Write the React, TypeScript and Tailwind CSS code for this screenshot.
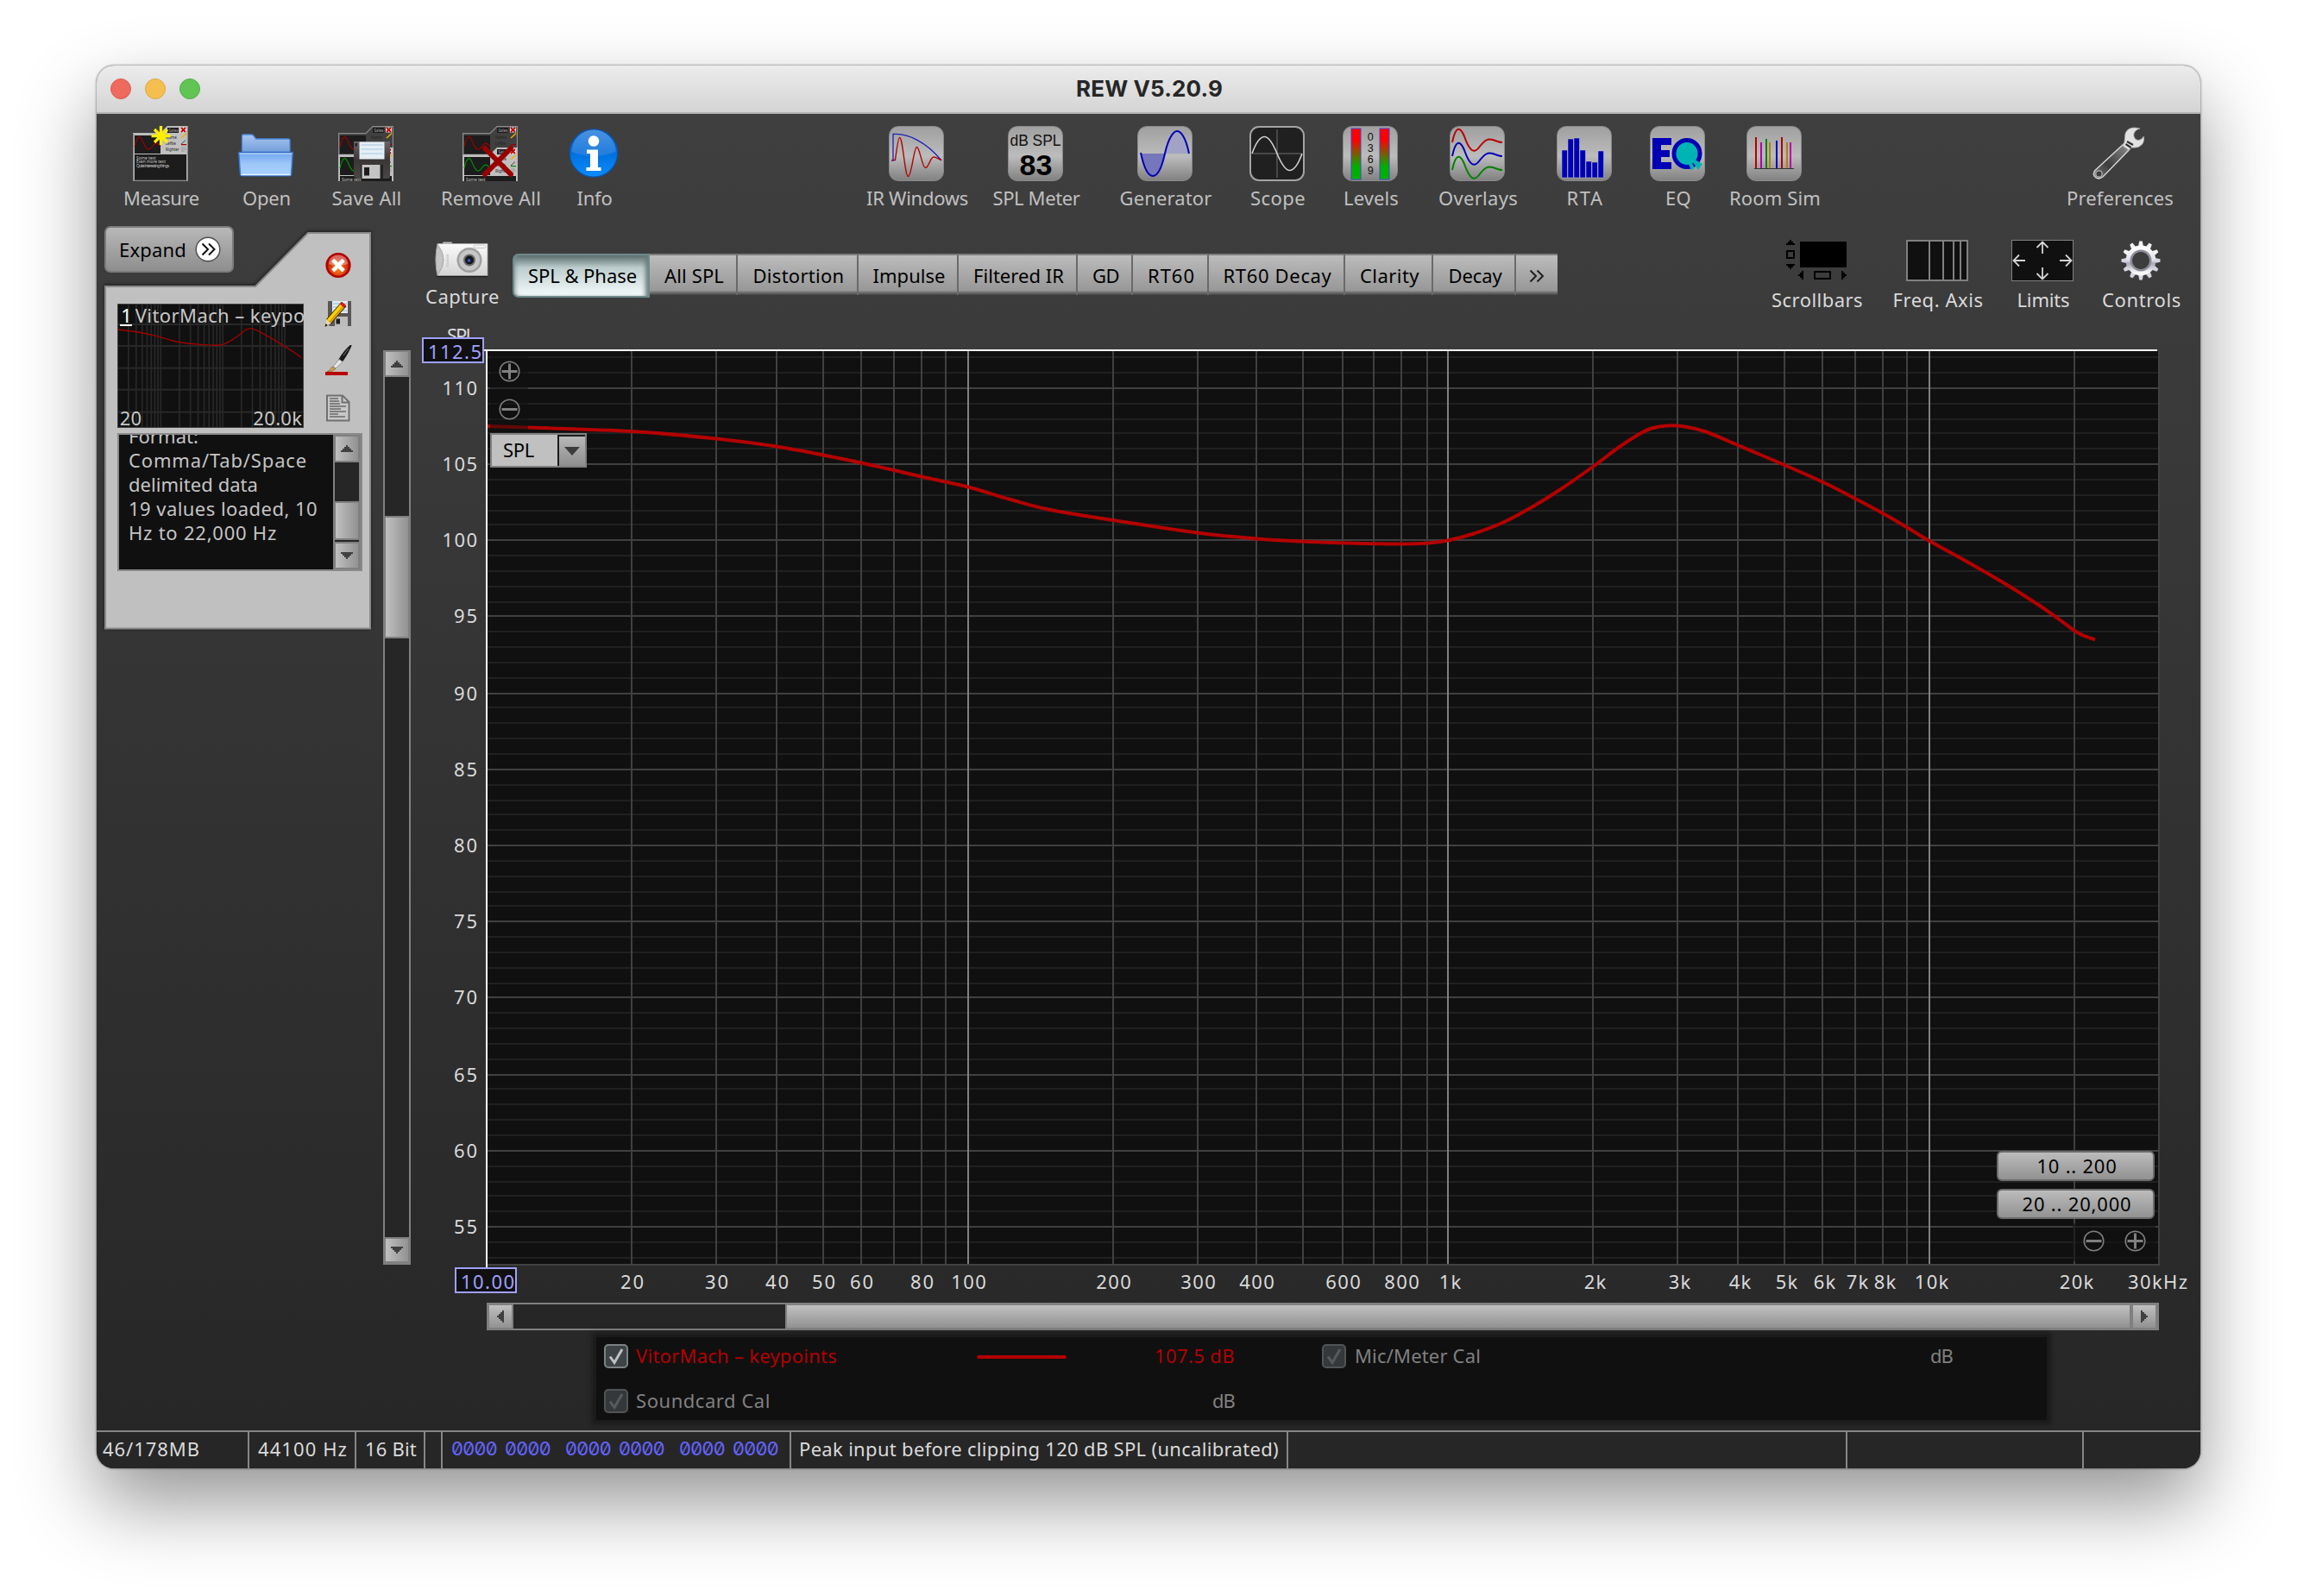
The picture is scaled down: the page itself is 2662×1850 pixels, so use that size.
import React, { useLayoutEffect, useRef, type ReactNode } from "react";

/* Single-line label whose tracking is adjusted so that it fills `w` pixels. */
function T({ w, children, className = "" }: { w: number; children: string; className?: string }) {
  const ref = useRef<HTMLSpanElement>(null);
  useLayoutEffect(() => {
    const el = ref.current;
    if (!el) return;
    el.style.letterSpacing = "0px";
    const natural = el.getBoundingClientRect().width;
    const n = children.length;
    el.style.letterSpacing = `${(w - natural) / n}px`;
  }, [w, children]);
  return (
    <span ref={ref} className={`inline-block whitespace-pre pl-[2px] leading-[22px] ${className}`}>
      {children}
    </span>
  );
}

/* ---------- toolbar icons ---------- */

function Tile({ children }: { children: ReactNode }) {
  return (
    <div className="h-16 w-16 rounded-[11px] border border-[#8a8a8a] bg-linear-to-b from-[#a0a0a0] via-[#bcbcbc] via-55% to-[#828282]">
      <svg viewBox="1 1 62 62" className="block h-full w-full">
        {children}
      </svg>
    </div>
  );
}

function MiniCard({ y = 0, wave, panel, edge }: { y?: number; wave: string; panel: string; edge: string }) {
  return (
    <g transform={`translate(0 ${y})`}>
      <path d="M.6 63V8.7H32L40 .6H63.4V63" fill={panel} stroke={edge} strokeWidth="1.2" />
      <rect x="2" y="11" width="30" height="21" fill="#1c1c1c" />
      <path d="M2 24C5 11 8 10 11 17s6 15 12 6c3-4 5-4 9 1" fill="none" stroke={wave} strokeWidth="1.2" />
      <rect x="2" y="33" width="60" height="30" fill="#1c1c1c" />
      <rect x="40" y="2" width="13" height="6" fill="#1c1c1c" />
      <text x="41.500" y="7" fontSize="4.500" fill="#aaa">Sales</text>
      <text x="38" y="15" fontSize="4.500" fill="#222">Name</text>
      <text x="38" y="22" fontSize="4.500" fill="#222">Leftie</text>
      <text x="38" y="29" fontSize="4.500" fill="#222">Righter</text>
      <rect x="55" y="1.500" width="7" height="6" fill="#e8e8e8" />
      <path d="M56 2l5 5M61 2l-5 5" stroke="#c00000" strokeWidth="1.800" />
      <path d="M56 14l6-5.500" stroke="#f0b000" strokeWidth="1.500" />
      <path d="M56 21l5-4.500" stroke="#444" strokeWidth="1" />
      <path d="M56 21.600h6" stroke={wave} strokeWidth="1.200" />
      <path d="M56 25h5M56 27h6M56 29h4" stroke="#888" strokeWidth=".7" />
      <text x="4" y="38.500" fontSize="4.800" fill="#c8c8c8">Some text</text>
    </g>
  );
}

function MeasureIcon() {
  return (
    <svg viewBox="0 0 64 64" className="h-16 w-16">
      <MiniCard wave="#a00000" panel="#c0c0c0" edge="#b8b8b8" />
      <text x="4" y="43.300" fontSize="4.800" fill="#c8c8c8">Even more text</text>
      <text x="4" y="48.300" fontSize="4.800" textLength="38" fill="#c8c8c8">Quite interesting things</text>
      <path d="M.6 9V63.400H63.400V.6" fill="none" stroke="#8c8c8c" strokeWidth="1.200" />
      <path d="M32.500 0v22M21.500 11.500h22M25 4l15 15M40 4L25 19" stroke="#ffee00" strokeWidth="3.400" />
      <circle cx="32.500" cy="11.500" r="4" fill="#fff000" />
    </svg>
  );
}

function OpenIcon() {
  return (
    <svg viewBox="0 0 64 64" className="h-16 w-16">
      <defs>
        <linearGradient id="fb" x1="0" y1="0" x2="0" y2="1">
          <stop offset="0" stopColor="#a9c6ee" />
          <stop offset="1" stopColor="#6f9cdc" />
        </linearGradient>
        <linearGradient id="ff" x1="0" y1="0" x2="0" y2="1">
          <stop offset="0" stopColor="#6fa6f0" />
          <stop offset=".5" stopColor="#9fc7f9" />
          <stop offset="1" stopColor="#a6d2fc" />
        </linearGradient>
      </defs>
      <path d="M4.500 32V11.500Q4.500 10 6 10H15q2 0 3 1.500L20.500 15H58Q60 15 60 17V32z" fill="url(#fb)" stroke="#4a86dc" strokeWidth="1.300" />
      <path d="M3 57.500H61V59H3z" fill="#2b2b2b" />
      <path d="M.8 30.800H63.200L61.500 56q-.1 1.800-2 1.800H4.500q-1.900 0-2-1.800z" fill="url(#ff)" stroke="#3c7bd4" strokeWidth="1.500" />
      <path d="M1.500 31.800H62.500" stroke="#d9ecff" strokeWidth="1.200" />
      <path d="M.8 30.500H63.200" stroke="#2d68c2" strokeWidth="1.400" />
      <path d="M3.500 56.500H60.500" stroke="#e8f4ff" strokeWidth="1.400" />
    </svg>
  );
}

function SaveAllIcon() {
  return (
    <svg viewBox="0 0 64 64" className="h-16 w-16">
      <defs>
        <linearGradient id="fl" x1="0" y1="0" x2="0" y2="1">
          <stop offset="0" stopColor="#6a6464" />
          <stop offset=".5" stopColor="#3a3636" />
          <stop offset="1" stopColor="#4a4646" />
        </linearGradient>
      </defs>
      <MiniCard wave="#a00000" panel="#404040" edge="#8c8c8c" />
      <MiniCard y={25} wave="#009000" panel="#c0c0c0" edge="#b8b8b8" />
      <path d="M18 18H60V58q0 3-3 3H21l-3-3z" fill="url(#fl)" />
      <rect x="24.500" y="18.500" width="29" height="20" fill="#e6eef5" />
      <path d="M26.500 22h25M26.500 27h25M26.500 32h25" stroke="#b9d3ea" strokeWidth="1.600" />
      <rect x="19.500" y="20" width="2.500" height="3.500" fill="#222" />
      <rect x="26" y="45" width="26" height="16" fill="#242222" />
      <path d="M27.500 45H48.500V61H27.500z" fill="#c4c4c4" />
      <rect x="30" y="48" width="6" height="9.500" fill="#1c1c1c" />
    </svg>
  );
}

function RemoveAllIcon() {
  return (
    <svg viewBox="0 0 64 64" className="h-16 w-16">
      <MiniCard wave="#a00000" panel="#404040" edge="#8c8c8c" />
      <MiniCard y={25} wave="#009000" panel="#c0c0c0" edge="#b8b8b8" />
      <path d="M26 26L56 56M56 26L26 56" stroke="#9b0000" strokeWidth="6" strokeLinecap="round" />
    </svg>
  );
}

function InfoIcon() {
  return (
    <svg viewBox="0 0 64 64" className="h-16 w-16">
      <defs>
        <linearGradient id="ig" x1="0" y1="0" x2="0" y2="1">
          <stop offset="0" stopColor="#0b62c4" />
          <stop offset=".5" stopColor="#0070de" />
          <stop offset="1" stopColor="#0a8cff" />
        </linearGradient>
        <linearGradient id="ih" x1="0" y1="0" x2="0" y2="1">
          <stop offset="0" stopColor="#5da2ea" />
          <stop offset="1" stopColor="#2a80dc" />
        </linearGradient>
      </defs>
      <circle cx="32" cy="31.500" r="27.600" fill="url(#ig)" stroke="#0a55b0" strokeWidth="1.200" />
      <path d="M6.500 30A25.500 25.500 0 0 1 57.500 30Q32 40 6.500 30z" fill="url(#ih)" opacity=".75" />
      <circle cx="32" cy="17.500" r="6.300" fill="#fff" />
      <path d="M24 27.500H37V48H40.500V52H23.500V48H28V32H24z" fill="#fff" />
    </svg>
  );
}

function IrIcon() {
  return (
    <Tile>
      <path d="M3 40H5V9.500C22 8 44 19 61 40" fill="none" stroke="#2020b8" strokeWidth="1.300" />
      <path d="M5 39.500H7.500C9 28 11 13.500 12.500 13.500c4 0 6 45 10 45S29 24.500 32.500 24.500s6 24 10 24S48 36 52 36s4 2.500 9 3.500" fill="none" stroke="#b40000" strokeWidth="1.400" />
    </Tile>
  );
}

function MeterIcon() {
  return (
    <Tile>
      <text x="2.500" y="22.500" fontSize="17.500" textLength="59" fontFamily="Liberation Sans" fill="#111">dB SPL</text>
      <text x="13.500" y="57" fontSize="34" textLength="38" fontWeight="bold" fontFamily="Liberation Sans" fill="#000">83</text>
    </Tile>
  );
}

function GeneratorIcon() {
  return (
    <Tile>
      <path d="M4 32C8 50 13 58 18 58S28 50 32 32z" fill="#7676bb" />
      <path d="M32 32C37 12 42 6 46 6S56 12 60 32z" fill="#a2a2c4" />
      <path d="M4 31C8 50 13 58 18 58S28 50 32 32S42 6 46 6S56 12 60 32" fill="none" stroke="#0000b8" strokeWidth="2" />
    </Tile>
  );
}

function ScopeIcon() {
  return (
    <div className="h-16 w-16 rounded-[11px] border-2 border-[#a4a4a4] bg-[#202020]">
      <svg viewBox="2 2 60 60" className="block h-full w-full">
        <path d="M32 4V60M4 32H60" stroke="#707070" strokeWidth="1" />
        <path d="M3 32C8 18 13 12.500 17.500 12.500S27 20 32 32S42 51.500 46.500 51.500S56 46 61 32" fill="none" stroke="#d0d0d0" strokeWidth="1.600" />
      </svg>
    </div>
  );
}

function LevelsIcon() {
  return (
    <Tile>
      <defs>
        <linearGradient id="lv" x1="0" y1="0" x2="0" y2="1">
          <stop offset=".22" stopColor="#ff0000" />
          <stop offset=".75" stopColor="#00b000" />
        </linearGradient>
      </defs>
      <rect x="10" y="3" width="11" height="59" fill="url(#lv)" stroke="#4646c8" strokeWidth="1" />
      <rect x="43" y="3" width="11" height="59" fill="url(#lv)" stroke="#4646c8" strokeWidth="1" />
      {["0", "3", "6", "9"].map((d, i) => (
        <text key={d} x="32.300" y={17 + i * 13} fontSize="12.500" textAnchor="middle" fontFamily="Liberation Sans" fill="#111">{d}</text>
      ))}
    </Tile>
  );
}

function OverlaysIcon() {
  const wave = "M3 19C7 0 12 0 17 12C22 26 27 34 34 25C40 17 44 14 50 16C55 18 58 19 61 19";
  return (
    <Tile>
      <path d={wave} fill="none" stroke="#b80000" strokeWidth="2" />
      <path d={wave} transform="translate(0 16)" fill="none" stroke="#0000b8" strokeWidth="2" />
      <path d={wave} transform="translate(0 32)" fill="none" stroke="#008000" strokeWidth="2" />
    </Tile>
  );
}

function RtaIcon() {
  const bars = [28, 15, 14, 28, 41, 42, 29];
  return (
    <Tile>
      {bars.map((y, i) => (
        <rect key={i} x={6 + i * 7} y={y} width="6.500" height={60 - y} fill="#0000b4" stroke="#c8c8c8" strokeWidth=".5" />
      ))}
    </Tile>
  );
}

function EqIcon() {
  return (
    <Tile>
      <path d="M3 14H25V22H13V28H23V36H13V42H25V50H3z" fill="#0000b4" />
      <ellipse cx="43" cy="32" rx="15" ry="15.500" fill="#00b4b4" stroke="#0000b4" strokeWidth="5" />
      <path d="M47 38L54 40 61 44 56 51z" fill="#00b4b4" />
      <path d="M46 42l4 8" stroke="#00b4b4" strokeWidth="4" />
    </Tile>
  );
}

function RoomIcon() {
  const lines: [number, number, string][] = [
    [11, 13, "#b40000"], [17, 19, "#b400b4"], [23, 15, "#008000"], [27, 19, "#b08000"],
    [35, 17, "#0000b4"], [41, 13, "#b40000"], [47, 19, "#b08000"], [51, 19, "#b400b4"],
  ];
  return (
    <Tile>
      {lines.map(([x, y, c]) => (
        <rect key={x} x={x - 1} y={y} width="2" height={49 - y} fill={c} />
      ))}
      <rect x="9" y="49" width="46" height="1" fill="#333" />
    </Tile>
  );
}

function WrenchIcon() {
  return (
    <svg viewBox="0 0 64 64" className="h-16 w-16">
      <defs>
        <linearGradient id="wr" x1="0" y1="1" x2="1" y2="0">
          <stop offset="0" stopColor="#7c7c7c" />
          <stop offset=".4" stopColor="#3c3c3c" />
          <stop offset="1" stopColor="#909090" />
        </linearGradient>
      </defs>
      <path d="M4.500 52L37 22l6 6L14 59.500q-5 4-9 .5t-.5-8z" fill="#1e1e1e" opacity=".6" />
      <path d="M4 51.500L37 21l7 6L13 59q-4.500 3.500-8.500.5T4 51.500z" fill="url(#wr)" stroke="#d4d4d4" strokeWidth="1.500" />
      <circle cx="8.500" cy="55.500" r="3.700" fill="#3c3c3c" stroke="#b4b4b4" strokeWidth="1.300" />
      <path d="M36 23C39 19 38 14 39 9C41 3 47 .5 56 3C52 4 48 7 49 12Q50 16 53.500 16.500Q57 17 60.500 12Q62 21 54 24.500Q50 25.500 46 25L43 28z" fill="#e2e2e2" stroke="#a8a8a8" strokeWidth=".8" />
      <path d="M41 18l7 4M39.500 21l6 4" stroke="#333" strokeWidth="2.200" />
    </svg>
  );
}

function Tool({ box, label, w, children }: { box: string; label: string; w: number; children: ReactNode }) {
  return (
    <div className={`flex flex-col items-center gap-2 ${box}`}>
      <div className="flex h-16 w-16 shrink-0">{children}</div>
      <T w={w} className="text-[#c0c0c0]">{label}</T>
    </div>
  );
}

/* ---------- scrollbars ---------- */

function Arrow({ rotate }: { rotate: string }) {
  return (
    <svg viewBox="0 0 14 14" className={`h-[14px] w-[14px] ${rotate}`}>
      <path d="M0 11V9H2V7H4V5H6V3H8V5H10V7H12V9H14V11z" fill="#404040" />
    </svg>
  );
}

const vKnob = "flex shrink-0 items-center justify-center border-2 border-[#808080] bg-linear-to-r from-[#c0c0c0] to-[#929292]";
const hKnob = "flex shrink-0 items-center justify-center border-2 border-[#808080] bg-linear-to-b from-[#c0c0c0] to-[#929292]";

/* ---------- left panel ---------- */

function Thumbnail() {
  const xs: number[] = [];
  for (let d = 10; d <= 10000; d *= 10)
    for (let k = 1; k < 10; k++) if (k * d > 20 && k * d < 20000) xs.push(108 + 215.500 * Math.log10((k * d) / 20));
  return (
    <svg viewBox="108 306 648 432" className="ml-[15px] mt-[36px] block h-[144px] w-[216px] shrink-0 bg-[#101010]">
      {xs.map((x) => (
        <rect key={x} x={x - 2} y="306" width="5" height="432" fill="#282828" />
      ))}
      {[378, 453, 530, 605, 683].map((y) => (
        <rect key={y} x="108" y={y - 3} width="648" height="6" fill="#282828" />
      ))}
      <path d="M110 396C160 400 200 408 230 415S280 430 300 435S380 447 410 449S455 452 467 450S490 442 510 430S540 408 550 400S565 392 572 392S595 399 620 413S680 448 700 461S735 484 748 494" fill="none" stroke="#a00000" strokeWidth="4" />
      <rect x="109.500" y="307.500" width="645" height="429" fill="none" stroke="#404040" strokeWidth="3" />
      <text x="121" y="372" fontSize="66" fill="#fff">1</text>
      <rect x="117" y="378" width="42" height="6" fill="#fff" />
      <text x="170" y="372" fontSize="66" textLength="590" fill="#c8c8c8">VitorMach – keypo</text>
      <text x="116" y="729" fontSize="66" textLength="76" fill="#c8c8c8">20</text>
      <text x="580" y="729" fontSize="66" textLength="170" fill="#c8c8c8">20.0k</text>
    </svg>
  );
}

function MeasurementCard() {
  return (
    <div className="relative ml-[9px] mt-2 h-[468px] w-[310px]">
      <svg viewBox="0 0 310 468" className="absolute inset-0 h-full w-full drop-shadow-[0_-1px_2px_#1c1c1c]">
        <path d="M1 70H175L236 8H308V466.500H1z" fill="#c0c0c0" stroke="#8a8a8a" strokeWidth="2" />
      </svg>
      <div className="relative flex">
        <div className="flex w-[231px] flex-col">
          <div className="flex h-[54px] w-[150px] items-center rounded-[7px] border-2 border-[#7c7c7c] bg-linear-to-b from-[#b8b8b8] to-[#8e8e8e] pl-[13px]">
            <T w={80} className="text-black">Expand</T>
            <svg viewBox="0 0 30 30" className="ml-[10px] h-[30px] w-[30px]">
              <circle cx="15" cy="15" r="13.800" fill="#fff" stroke="#505050" strokeWidth="1.500" />
              <path d="M8.500 8.500L15 15l-6.500 6.500M16 8.500L22.500 15 16 21.500" fill="none" stroke="#111" strokeWidth="2" />
            </svg>
          </div>
          <Thumbnail />
        </div>
        <div className="ml-6 flex w-8 flex-col items-center pt-[30px]">
          <svg viewBox="0 0 32 32" className="h-8 w-8 shrink-0">
            <defs>
              <radialGradient id="rx" cx=".5" cy=".65" r=".5">
                <stop offset="0" stopColor="#ff8c1a" />
                <stop offset="1" stopColor="#c61a0a" />
              </radialGradient>
            </defs>
            <circle cx="16" cy="15.500" r="13.300" fill="url(#rx)" stroke="#b00000" strokeWidth="2.600" />
            <path d="M5 14a11 10.500 0 0 1 22 0q-11 4-22 0z" fill="#fff" opacity=".35" />
            <path d="M9.700 9.300l12.500 12.500M22.200 9.300L9.700 21.800" stroke="#fff" strokeWidth="4.600" />
          </svg>
          <svg viewBox="0 0 32 32" className="mt-6 h-8 w-8 shrink-0">
            <path d="M4 1H31V30H6l-2-2z" fill="#5a5656" />
            <rect x="9" y="1" width="18" height="14" fill="#e4ecf3" />
            <path d="M10 4h16M10 8h16M10 12h16" stroke="#a8c4de" strokeWidth="1.300" />
            <rect x="12" y="19" width="15" height="11" fill="#bcbcbc" />
            <rect x="13.500" y="21.500" width="4.500" height="6" fill="#1c1c1c" />
            <path d="M5 24.500L22.500 4.500" stroke="#2a2000" strokeWidth="7.600" />
            <path d="M5 24.500L21 6" stroke="#ffd000" strokeWidth="5.800" />
            <path d="M6 25.500L22 7" stroke="#d08c00" strokeWidth="1.600" />
            <path d="M20.500 6.700L22.800 4" stroke="#e01414" strokeWidth="6.200" />
            <path d="M.5 31L2.500 22.500l5 4.300z" fill="#ead9ae" />
            <path d="M.5 31l1-4 2.300 2z" fill="#111" />
          </svg>
          <svg viewBox="0 0 32 36" className="mt-5 h-9 w-8 shrink-0">
            <path d="M17 17C21 10 26 4 31 0Q28 8 21 18z" fill="#1a1a1a" stroke="#1a1a1a" strokeWidth="1.500" />
            <path d="M22 12L28 4" stroke="#777" strokeWidth="1" />
            <path d="M10 25L17 16.500l4 3L13 27z" fill="#e6e6e6" stroke="#888" strokeWidth=".8" />
            <path d="M3 31Q7 29 9 25l4 2.500Q10 31 3 31z" fill="#c8a050" stroke="#7a5a20" strokeWidth=".6" />
            <rect x="1" y="31" width="26" height="4" fill="#b80000" />
          </svg>
          <svg viewBox="0 0 32 34" className="mt-5 h-[34px] w-8 shrink-0">
            <path d="M3 2.500H21L28.500 10V31.500H3z" fill="#c8c8c8" stroke="#707070" strokeWidth="2" />
            <path d="M20.500 3V10.500H28" fill="none" stroke="#707070" strokeWidth="2" />
            <path d="M6 6h10M6 9h11M6 12h12M6 15h19M6 18h13M6 21h19M6 24h10M6 27h18" stroke="#808080" strokeWidth="1.800" />
          </svg>
        </div>
      </div>
      <div className="relative ml-[15px] mt-[6px] flex h-[160px] w-[284px] border-2 border-[#8a8a8a] bg-[#101010]">
        <div className="flex h-full w-[248px] flex-col items-start overflow-hidden pl-[9px] text-[#c4c4c4]">
          <T w={83} className="-mt-[10px]">Format:</T>
          <T w={209} className="mt-[6px]">Comma/Tab/Space</T>
          <T w={152} className="mt-[6px]">delimited data</T>
          <T w={221} className="mt-[6px]">19 values loaded, 10</T>
          <T w={174} className="mt-[6px]">Hz to 22,000 Hz</T>
        </div>
        <div className="flex h-full w-8 flex-col border-x-2 border-[#808080] bg-[#262626]">
          <div className={`-mx-px h-8 ${vKnob}`}><Arrow rotate="" /></div>
          <div className={`-mx-px mt-[45px] h-[45px] ${vKnob}`} />
          <div className={`-mx-px mt-[2px] h-8 ${vKnob}`}><Arrow rotate="rotate-180" /></div>
        </div>
      </div>
    </div>
  );
}

/* ---------- tabs ---------- */

const tabs: [string, number, string][] = [
  ["All SPL", 71, "w-[102px]"],
  ["Distortion", 108, "w-[140px]"],
  ["Impulse", 86, "w-[116px]"],
  ["Filtered IR", 107, "w-[138px]"],
  ["GD", 33, "w-[64px]"],
  ["RT60", 57, "w-[88px]"],
  ["RT60 Decay", 128, "w-[158px]"],
  ["Clarity", 71, "w-[102px]"],
  ["Decay", 64, "w-[96px]"],
];

function Tabs() {
  return (
    <div className="mt-10 flex h-[52px] items-start text-black">
      <div className="flex h-[51px] w-[159px] justify-center rounded-l-[7px] border-2 border-[#6e8a8a] bg-linear-to-b from-[#5c6e6e] via-[#bccccc] via-30% to-[#f4fbfb] pl-px pt-3 shadow-[inset_-5px_0_5px_-2px_#6c7c7c,inset_5px_0_5px_-4px_#7c9090]">
        <T w={128}>SPL &amp; Phase</T>
      </div>
      {tabs.map(([name, w, box]) => (
        <div key={name} className={`flex h-[48px] justify-center border-r-2 border-t-2 border-r-[#6a6a6a] border-t-[#7c7c7c] bg-linear-to-b from-[#bcbcbc] via-[#989898] via-88% to-[#444] pl-px pt-3 ${box}`}>
          <T w={w}>{name}</T>
        </div>
      ))}
      <div className="flex h-[48px] w-12 justify-center border-t-2 border-t-[#7c7c7c] bg-linear-to-b from-[#bcbcbc] via-[#989898] via-88% to-[#444] pt-4">
        <svg viewBox="0 0 18 16" className="h-4 w-[18px]">
          <path d="M1.500 1.500L8 8l-6.500 6.500M9.500 1.500L16 8l-6.500 6.500" fill="none" stroke="#222" strokeWidth="2" />
        </svg>
      </div>
    </div>
  );
}

function CameraIcon() {
  return (
    <svg viewBox="0 0 62 44" className="h-11 w-[62px]">
      <defs>
        <linearGradient id="cm" x1="0" y1="0" x2="0" y2="1">
          <stop offset="0" stopColor="#fafafa" />
          <stop offset="1" stopColor="#d4d4d4" />
        </linearGradient>
      </defs>
      <rect x="9" y=".5" width="11" height="3" rx="1" fill="#bdbdbd" />
      <path d="M3 2.500H61V40H3Q-1 21 3 2.500z" fill="url(#cm)" stroke="#a8a8a8" strokeWidth=".8" />
      <path d="M3 3Q17 21 3 39Q-1 21 3 3z" fill="#c4c4c4" stroke="#999" strokeWidth=".8" />
      <path d="M2 40.500H61" stroke="#1c1c1c" strokeWidth="1.400" />
      <rect x="45" y="4" width="14" height="3.500" rx="1.700" fill="#f4f4f4" stroke="#b4b4b4" strokeWidth=".7" />
      <path d="M14.800 15v14" stroke="#c4c4c4" strokeWidth="2.400" strokeDasharray="1.500 1" />
      <circle cx="40" cy="21.500" r="14.500" fill="#a0a0a0" />
      <circle cx="40" cy="21.500" r="12" fill="#c6c6c6" />
      <circle cx="40" cy="21.500" r="7" fill="#6c6c6c" />
      <circle cx="40" cy="21.500" r="5" fill="#14141c" />
      <circle cx="39.500" cy="22" r="2" fill="#3c50b8" />
    </svg>
  );
}

function View({ box, label, w, children }: { box: string; label: string; w: number; children: ReactNode }) {
  return (
    <div className={`flex flex-col items-center gap-[10px] pt-6 ${box}`}>
      <div className="flex h-12 w-18 items-center justify-center">{children}</div>
      <T w={w} className="text-[#dadada]">{label}</T>
    </div>
  );
}

function ViewButtons() {
  const teeth = Array.from({ length: 12 }, (_, i) => i * 30);
  return (
    <>
      <View box="ml-[246px] w-[108px]" label="Scrollbars" w={108}>
        <svg viewBox="0 0 72 48" className="h-12 w-18">
          <rect x="17" y="2" width="54" height="30" fill="#000" />
          <path d="M1 6h10V4H9V2H7V0H5v2H3v2H1zM1 28h10v2H9v2H7v2H5v-2H3v-2H1zM21 36v10h-2v-2h-2v-2h-2v-2h2v-2h2v-2zM65 36v10h2v-2h2v-2h2v-2h-2v-2h-2v-2z" fill="#000" />
          <path d="M2 13h8v8H2zM34 37h18v8H34z" fill="none" stroke="#000" strokeWidth="2" />
        </svg>
      </View>
      <View box="ml-8 w-[108px]" label="Freq. Axis" w={107}>
        <svg viewBox="0 0 72 48" className="h-12 w-18">
          <rect x="1" y="1" width="70" height="46" fill="#101010" stroke="#808080" strokeWidth="2" />
          <path d="M27 1V47M43 1V47M55 1V47M63 1V47" stroke="#808080" strokeWidth="2" />
        </svg>
      </View>
      <View box="ml-[28px] w-[80px]" label="Limits" w={63}>
        <svg viewBox="0 0 72 48" className="h-12 w-18">
          <rect x=".5" y=".5" width="71" height="47" fill="#101010" stroke="#808080" />
          <path d="M36 16V3M29.500 9L36 2.500 42.500 9M36 32V45M29.500 39L36 45.500 42.500 39M16 24H3M9 17.500L2.500 24 9 30.500M56 24H69M63 17.500L69.500 24 63 30.500" fill="none" stroke="#d4d4d4" strokeWidth="1.800" />
        </svg>
      </View>
      <View box="ml-[28px] w-[92px]" label="Controls" w={94}>
        <svg viewBox="-24 -24 48 48" className="h-12 w-12">
          <defs>
            <linearGradient id="gr" x1="0" y1="0" x2="0" y2="1">
              <stop offset="0" stopColor="#fdfdfd" />
              <stop offset=".5" stopColor="#dcdce4" />
              <stop offset=".62" stopColor="#a8a8ba" />
              <stop offset="1" stopColor="#f8f8fa" />
            </linearGradient>
          </defs>
          {teeth.map((a) => (
            <path key={a} d="M-3.200-15L-1.800-22.500H1.800L3.200-15z" transform={`rotate(${a})`} fill={a > 80 && a < 280 ? "#d4d4e0" : "#f2f2f4"} />
          ))}
          <circle r="14" fill="none" stroke="url(#gr)" strokeWidth="7" />
          <circle r="11.200" fill="none" stroke="#8c8c98" strokeWidth="2.600" />
          <circle r="9.800" fill="#3d3d3d" />
        </svg>
      </View>
    </>
  );
}

/* ---------- chart ---------- */

const curve: [number, number][] = [
  [564, 494], [612, 495.5], [732, 500], [830, 508.500], [900, 517.500], [954, 527.500], [998, 536.500], [1036, 545],
  [1070, 553], [1122, 564.500], [1171, 579], [1217, 591], [1290, 603], [1387, 617.500], [1457, 624.500], [1508, 627.500],
  [1562, 629.500], [1621, 630.500], [1655, 629.500], [1678, 626.500], [1708, 618.500], [1741, 606], [1775, 588], [1808, 567.500],
  [1846, 541], [1876, 518.500], [1900, 503], [1914, 496.500], [1932, 493.500], [1952, 494.500], [1977, 500.500], [2015, 516.500],
  [2068, 539], [2114, 559.500], [2152, 579], [2182, 595], [2207, 609.500], [2236, 627], [2283, 653], [2326, 678],
  [2363, 701.500], [2385, 717], [2404, 731], [2414, 736.500], [2428, 741.500],
];

function smooth(p: [number, number][]) {
  let d = `M${p[0][0]} ${p[0][1]}`;
  for (let i = 0; i < p.length - 1; i++) {
    const a = p[Math.max(i - 1, 0)], b = p[i], c = p[i + 1], e = p[Math.min(i + 2, p.length - 1)];
    d += `C${b[0] + (c[0] - a[0]) / 6} ${b[1] + (c[1] - a[1]) / 6} ${c[0] - (e[0] - b[0]) / 6} ${c[1] - (e[1] - b[1]) / 6} ${c[0]} ${c[1]}`;
  }
  return d;
}

const odd = (v: number) => 2 * Math.round((v - 1) / 2) + 1;
const gx = (f: number) => odd(563.300 + 557.200 * Math.log10(f / 10));
const gy = (db: number) => odd(448.700 + (110 - db) * 17.680);

const freqLabels: [number, string][] = [
  [20, "20"], [30, "30"], [40, "40"], [50, "50"], [60, "60"], [80, "80"], [100, "100"], [200, "200"], [300, "300"],
  [400, "400"], [600, "600"], [800, "800"], [1000, "1k"], [2000, "2k"], [3000, "3k"], [4000, "4k"], [5000, "5k"],
  [6000, "6k"], [7000, "7k"], [8000, "8k"], [10000, "10k"], [20000, "20k"],
];

function ZoomMark({ x, y, plus }: { x: number; y: number; plus?: boolean }) {
  return (
    <g stroke="#808080" fill="none">
      <circle cx={x} cy={y} r="11.300" strokeWidth="1.500" />
      <path d={plus ? `M${x - 9} ${y}H${x + 9}M${x} ${y - 9}V${y + 9}` : `M${x - 9} ${y}H${x + 9}`} strokeWidth="3" />
    </g>
  );
}

function Chart() {
  const freqs: number[] = [];
  for (let d = 10; d <= 10000; d *= 10) for (let k = 1; k < 10; k++) if (k * d > 10 && k * d <= 30000) freqs.push(k * d);
  const dbs = Array.from({ length: 60 }, (_, i) => 112 - i).filter((v) => v >= 53);
  return (
    <svg viewBox="476 391 2074 1111" className="block h-[1111px] w-[2074px] overflow-visible text-[22px]">
      <rect x="565" y="407" width="1938" height="1060" fill="#101010" />
      {dbs.map((v) => v % 5 !== 0 && <rect key={v} x="565" y={gy(v)} width="1937" height="2" fill="#202020" />)}
      {dbs.map((v) => v % 5 === 0 && <rect key={v} x="565" y={gy(v)} width="1937" height="2" fill="#404040" />)}
      {freqs.map((f) => (
        <rect key={f} x={gx(f)} y="407" width="2" height="1060" fill={f === 100 || f === 1000 || f === 10000 ? "#808080" : "#404040"} />
      ))}
      <rect x="565" y="1465" width="1938" height="2" fill="#404040" />
      <path d={smooth(curve)} fill="none" stroke="#b40000" strokeWidth="4" />
      <rect x="568" y="408" width="44" height="93" fill="#101010" opacity=".5" />
      <rect x="2402" y="1418" width="96" height="44" fill="#101010" opacity=".6" />
      <ZoomMark x={590.500} y={430.500} plus />
      <ZoomMark x={590.500} y={474.500} />
      <ZoomMark x={2426.500} y={1438.500} />
      <ZoomMark x={2474.500} y={1438.500} plus />
      <rect x="561" y="405" width="1939" height="2" fill="#fff" />
      <rect x="563" y="405" width="2" height="1064" fill="#fff" />

      <text x="518" y="397" textLength="33" fill="#dadada">SPL</text>
      <rect x="490" y="392" width="70" height="28" fill="#101010" stroke="#a0a0ff" strokeWidth="2" />
      <text x="496" y="416" textLength="62" fill="#a0a0ff">112.5</text>
      {[110, 105, 100, 95, 90, 85, 80, 75, 70, 65, 60, 55].map((v) => (
        <text key={v} x={553} y={gy(v) + 8.500} textAnchor="end" textLength={v > 99 ? 40.500 : 27} fill="#dadada">{v}</text>
      ))}
      {freqLabels.map(([f, s]) => {
        const k = s.endsWith("k");
        return (
          <text key={f} x={gx(f) + (k ? 3.500 : 1.500)} y="1494" textAnchor="middle" textLength={k ? (s.length - 1) * 14 + 11.500 : s.length * 13.500} fill="#dadada">{s}</text>
        );
      })}
      <text x="2466" y="1494" textLength="69" fill="#dadada">30kHz</text>
      <rect x="528" y="1470" width="70" height="28" fill="#101010" stroke="#a0a0ff" strokeWidth="2" />
      <text x="534" y="1494" textLength="62" fill="#a0a0ff">10.00</text>
    </svg>
  );
}

const rangeBtn = "flex h-[35px] w-[183px] items-center justify-center rounded-[6px] border-2 border-[#6c6c6c] bg-linear-to-b from-[#bcbcbc] to-[#929292] pb-[2px] pl-px text-black";

/* ---------- legend ---------- */

function Check({ on }: { on?: boolean }) {
  return (
    <svg viewBox="0 0 28 28" className={`h-7 w-7 shrink-0 ${on ? "" : "opacity-60"}`}>
      <rect x="1" y="1" width="26" height="26" rx="4" fill={on ? "#3c4446" : "#4c5458"} stroke="#7c8282" strokeWidth="2" />
      <path d="M7 14.500L12 21.500 21 6" fill="none" stroke={on ? "#c0c0c0" : "#8c8c8c"} strokeWidth="3" />
    </svg>
  );
}

function Legend() {
  return (
    <div className="ml-[215px] mt-2 flex h-24 w-[1681px] bg-[#101010] shadow-[0_0_5px_5px_#1b1b1b]">
      <div className="flex flex-col">
        <div className="mt-2 flex h-7 items-center pl-[9px]">
          <Check on />
          <T w={235} className="-mt-[2px] ml-[7px] text-[#b40000]">VitorMach – keypoints</T>
          <div className="ml-[162px] mt-[2px] h-1 w-[104px] rounded-full bg-[#b40000]" />
          <T w={95} className="-mt-[2px] ml-[100px] text-[#b40000]">107.5 dB</T>
        </div>
        <div className="mt-6 flex h-7 items-center pl-[9px]">
          <Check />
          <T w={158} className="-mt-[2px] ml-[7px] text-[#808080]">Soundcard Cal</T>
          <T w={28} className="-mt-[2px] ml-[510px] text-[#808080]">dB</T>
        </div>
      </div>
      <div className="mt-2 ml-[101px] flex h-7 items-center">
        <Check />
        <T w={148} className="-mt-[2px] ml-[8px] text-[#808080]">Mic/Meter Cal</T>
        <T w={28} className="-mt-[2px] ml-[519px] text-[#808080]">dB</T>
      </div>
    </div>
  );
}

function StatusBar() {
  const cell = "flex shrink-0 items-start border-r-2 border-[#868686] pt-2";
  return (
    <div className="flex h-[44px] border-t-2 border-[#868686] bg-[#262626] text-[#dadada]">
      <div className={`${cell} w-[177px] pl-[5px]`}><T w={115}>46/178MB</T></div>
      <div className={`${cell} w-[124px] pl-[8px]`}><T w={106}>44100 Hz</T></div>
      <div className={`${cell} w-[80px] pl-[8px]`}><T w={62}>16 Bit</T></div>
      <div className={`${cell} w-[20px]`} />
      <div className={`${cell} w-[404px] pl-[8px] font-[Inter] text-[#6464ff] slashed-zero`}>
        <T w={55}>0000</T>
        <T w={55} className="ml-[7px]">0000</T>
        <T w={55} className="ml-[15px]">0000</T>
        <T w={55} className="ml-[7px]">0000</T>
        <T w={55} className="ml-[15px]">0000</T>
        <T w={55} className="ml-[7px]">0000</T>
      </div>
      <div className={`${cell} w-[576px] pl-[7px]`}><T w={558}>Peak input before clipping 120 dB SPL (uncalibrated)</T></div>
      <div className={`${cell} w-[648px]`} />
      <div className={`${cell} w-[274px]`} />
      <div className="flex-1" />
    </div>
  );
}

export default function App() {
  return (
    <div className="h-[1850px] w-[2662px] overflow-hidden bg-white pl-28 pt-[76px] font-['Noto_Sans',sans-serif] text-[22px]">
      <div className="flex h-[1626px] w-[2438px] flex-col overflow-hidden rounded-[20px] bg-linear-to-b from-[#404040] to-[#262626] shadow-[0_0_2px_1px_rgba(0,0,0,0.3),0_40px_88px_rgba(0,0,0,0.42)]">
        <div className="grid h-14 shrink-0 grid-cols-[1fr_auto_1fr] items-center border-b-2 border-[#b4b4b4] bg-linear-to-b from-[#ececec] to-[#d4d4d4] pl-4">
          <div className="flex gap-4">
            <div className="h-6 w-6 rounded-full border border-[#d85a50] bg-[#ee6a5f]" />
            <div className="h-6 w-6 rounded-full border border-[#daa63e] bg-[#f5bf4f]" />
            <div className="h-6 w-6 rounded-full border border-[#50ac44] bg-[#61c554]" />
          </div>
          <T w={172} className="-ml-4 font-[Inter] text-[26px] font-bold text-[#262626]">REW V5.20.9</T>
          <div />
        </div>

        <div className="flex h-[122px] shrink-0 pt-[14px]">
          <Tool box="ml-[30px] w-[88px]" label="Measure" w={90}><MeasureIcon /></Tool>
          <Tool box="ml-[46px] w-[64px]" label="Open" w={58}><OpenIcon /></Tool>
          <Tool box="ml-[44px] w-[80px]" label="Save All" w={83}><SaveAllIcon /></Tool>
          <Tool box="ml-[46px] w-[116px]" label="Remove All" w={118}><RemoveAllIcon /></Tool>
          <Tool box="ml-[30px] w-[64px]" label="Info" w={43}><InfoIcon /></Tool>
          <Tool box="ml-[282px] w-[120px]" label="IR Windows" w={120}><IrIcon /></Tool>
          <Tool box="ml-[28px] w-[100px]" label="SPL Meter" w={103}><MeterIcon /></Tool>
          <Tool box="ml-[46px] w-[108px]" label="Generator" w={109}><GeneratorIcon /></Tool>
          <Tool box="ml-[44px] w-[64px]" label="Scope" w={66}><ScopeIcon /></Tool>
          <Tool box="ml-[44px] w-[64px]" label="Levels" w={66}><LevelsIcon /></Tool>
          <Tool box="ml-[46px] w-[92px]" label="Overlays" w={94}><OverlaysIcon /></Tool>
          <Tool box="ml-[46px] w-[64px]" label="RTA" w={45}><RtaIcon /></Tool>
          <Tool box="ml-[44px] w-[64px]" label="EQ" w={32}><EqIcon /></Tool>
          <Tool box="ml-[28px] w-[104px]" label="Room Sim" w={108}><RoomIcon /></Tool>
          <Tool box="ml-[286px] w-[124px]" label="Preferences" w={126}><WrenchIcon /></Tool>
        </div>

        <div className="flex h-[1404px] shrink-0">
          <div className="w-[332px] shrink-0">
            <MeasurementCard />
          </div>
          <div className="mt-[152px] flex h-[1060px] w-8 shrink-0 flex-col border-2 border-[#808080] bg-[#262626]">
            <div className={`-mx-px -mt-[2px] h-[31px] ${vKnob}`}><Arrow rotate="" /></div>
            <div className={`-mx-px mt-[161px] h-[142px] ${vKnob}`} />
            <div className={`-mx-px mt-auto h-[30px] ${vKnob}`}><Arrow rotate="rotate-180" /></div>
          </div>
          <div className="w-[2074px] shrink-0">
            <div className="flex h-[137px]">
              <div className="ml-[14px] flex w-[90px] flex-col items-center pt-[26px]">
                <CameraIcon />
                <T w={88} className="mt-[8px] text-[#dadada]">Capture</T>
              </div>
              <div className="ml-[14px]"><Tabs /></div>
              <ViewButtons />
            </div>
            <div className="relative">
              <Chart />
              <div className="absolute left-[92px] top-[111px] flex h-10 w-28 border-2 border-[#808080] bg-[#c0c0c0] text-black">
                <T w={38} className="ml-[11px] mt-[6px]">SPL</T>
                <div className="ml-auto flex h-full w-8 items-center justify-center border-l-2 border-t-2 border-[#1c1c1c] bg-linear-to-b from-[#b8b8b8] to-[#8e8e8e]">
                  <svg viewBox="0 0 18 10" className="h-[10px] w-[18px]"><path d="M0 0H18L9 10z" fill="#3c3c3c" /></svg>
                </div>
              </div>
              <div className="absolute left-[1838px] top-[943px] flex flex-col gap-[9px]">
                <div className={rangeBtn}><T w={95}>10 .. 200</T></div>
                <div className={rangeBtn}><T w={129}>20 .. 20,000</T></div>
              </div>
            </div>
            <div className="ml-[88px] mt-2 flex h-8 w-[1938px] border-2 border-[#808080] bg-[#262626]">
              <div className={`-my-px -ml-px w-[30px] ${hKnob}`}><Arrow rotate="-rotate-90" /></div>
              <div className={`-my-px ml-[315px] w-[1560px] ${hKnob}`} />
              <div className={`-my-px ml-auto w-[30px] ${hKnob}`}><Arrow rotate="rotate-90" /></div>
            </div>
            <Legend />
          </div>
        </div>

        <StatusBar />
      </div>
    </div>
  );
}
